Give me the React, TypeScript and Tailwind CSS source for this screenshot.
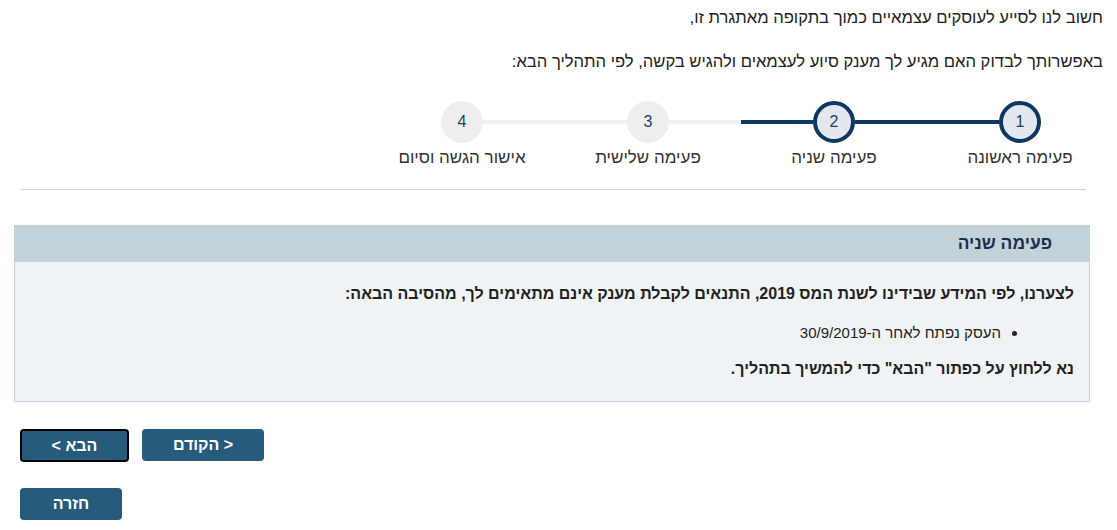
import React from "react";

type Step = {
  num: number;
  label: string;
  done: boolean;
  lineRight: "none" | "done" | "todo";
  lineLeft: "none" | "done" | "todo";
};

const steps: Step[] = [
  { num: 1, label: "פעימה ראשונה", done: true, lineRight: "none", lineLeft: "done" },
  { num: 2, label: "פעימה שניה", done: true, lineRight: "done", lineLeft: "done" },
  { num: 3, label: "פעימה שלישית", done: false, lineRight: "todo", lineLeft: "todo" },
  { num: 4, label: "אישור הגשה וסיום", done: false, lineRight: "todo", lineLeft: "none" },
];

const lineClass = (kind: Step["lineLeft"]) =>
  kind === "done"
    ? "flex-1 h-[4px] bg-[#0e3863]"
    : kind === "todo"
    ? "flex-1 h-[4px] bg-[#f0f0f0]"
    : "flex-1 h-[4px]";

const StepItem = ({ step }: { step: Step }) => (
  <div className="w-[186px] flex flex-col items-center">
    <div className="w-full flex items-center h-[42px]">
      <div className={lineClass(step.lineRight)} />
      <div
        className={
          step.done
            ? "w-[42px] h-[42px] rounded-full border-[4px] border-[#0e3863] bg-[#e3e8f0] flex items-center justify-center text-[16px] text-[#1d3c6e]"
            : "w-[42px] h-[42px] rounded-full bg-[#eeeeee] flex items-center justify-center text-[16px] text-[#1d3c6e]"
        }
      >
        {step.num}
      </div>
      <div className={lineClass(step.lineLeft)} />
    </div>
    <div className="mt-[5px] leading-[20px] text-[17px] text-[#333] whitespace-nowrap">{step.label}</div>
  </div>
);

export default function App() {
  return (
    <div
      dir="rtl"
      className="w-[1117px] h-[530px] overflow-hidden bg-white text-[15px] text-[#222] font-['Liberation_Sans',Arial,sans-serif]"
    >
      <div className="pr-[14px] pt-[8px] text-[16.6px]">
        <p className="leading-[20px]">חשוב לנו לסייע לעוסקים עצמאיים כמוך בתקופה מאתגרת זו,</p>
        <p className="mt-[24px] leading-[20px]">
          באפשרותך לבדוק האם מגיע לך מענק סיוע לעצמאים ולהגיש בקשה, לפי התהליך הבא:
        </p>
      </div>

      <div className="flex pr-[4px] mt-[29px]">
        {steps.map((s) => (
          <StepItem key={s.num} step={s} />
        ))}
      </div>

      <div className="mt-[21px] mr-[31px] ml-[21px] border-t border-[#cfd2d6]" />

      <div className="mt-[35px] mr-[27px] ml-[14px]">
        <div className="h-[37px] bg-[#c3d1d9] flex items-center pr-[38px]">
          <span className="font-bold text-[17.4px] text-[#1b2f4f]">פעימה שניה</span>
        </div>
        <div className="bg-[#eff3f5] border border-t-0 border-[#c5cbd9] pr-[15px] pt-[22px] pb-[22px]">
          <p className="font-bold leading-[20px] text-[16px]">
            לצערנו, לפי המידע שבידינו לשנת המס 2019, התנאים לקבלת מענק אינם מתאימים לך, מהסיבה הבאה:
          </p>
          <ul className="mt-[19px] pr-[73px] list-disc leading-[20px]">
            <li>העסק נפתח לאחר ה-30/9/2019</li>
          </ul>
          <p className="mt-[16px] font-bold leading-[20px] text-[16px]">
            נא ללחוץ על כפתור "הבא" כדי להמשיך בתהליך.
          </p>
        </div>
      </div>

      <div className="mt-[27px] ml-[20px] flex justify-end gap-[13px]">
        <button className="w-[122px] h-[32px] rounded-[4px] bg-[#265b7c] text-white font-bold text-[16px]">
          {"< הקודם"}
        </button>
        <button className="w-[109px] h-[33px] rounded-[4px] bg-[#265b7c] border-2 border-black text-white font-bold text-[16px]">
          {"הבא >"}
        </button>
      </div>

      <div className="mt-[26px] ml-[20px] flex justify-end">
        <button className="w-[102px] h-[32px] rounded-[4px] bg-[#265b7c] text-white font-bold text-[16px]">
          חזרה
        </button>
      </div>
    </div>
  );
}
